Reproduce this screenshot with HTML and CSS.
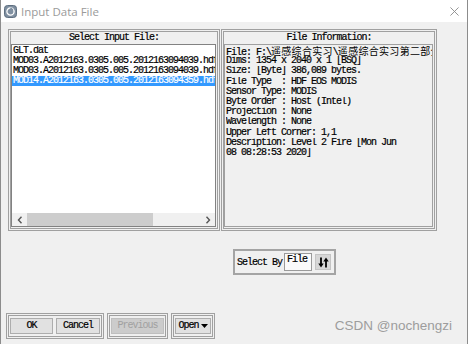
FILE: index.html
```html
<!DOCTYPE html>
<html lang="en">
<head>
    <meta charset="UTF-8">
    <title>Input Data File</title>
    <link rel="stylesheet" href="styles.css">
</head>
<body>
    <div class="window">
        <div class="titlebar">
            <svg class="app-icon" viewBox="0 0 13 13">
                <rect x="0.5" y="0.5" width="12" height="12" rx="3" fill="#7f8fa0" stroke="#5f6f80"/>
                <circle cx="6.5" cy="6.5" r="3.6" fill="none" stroke="#fff" stroke-width="1.3"/>
                <path d="M6.5 2.9 L9 5" stroke="#7f8fa0" stroke-width="1.4"/>
            </svg>
            <span class="title">Input Data File</span>
            <svg class="close" viewBox="0 0 10 10">
                <path d="M0.5 0.5 L9.5 9.5 M9.5 0.5 L0.5 9.5" stroke="#8a8a8a" stroke-width="1"/>
            </svg>
        </div>
        <div class="client">
            <div class="panels">
                <div class="panel panel-files">
                    <div class="panel-head">Select Input File:</div>
                    <div class="listbox">
                        <ul class="file-list">
                            <li>GLT.dat</li>
                            <li>MOD03.A2012163.0305.005.2012163094039.hdf</li>
                            <li>MOD03.A2012163.0305.005.2012163094039.hdf</li>
                            <li class="selected">MOD14.A2012163.0305.005.2012163094359.hdf</li>
                        </ul>
                        <div class="hscroll">
                            <div class="arrow">
                                <svg viewBox="0 0 6 8"><path d="M4.5 0.8 L1.5 4 L4.5 7.2" fill="none" stroke="#555" stroke-width="1.4"/></svg>
                            </div>
                            <div class="thumb"></div>
                            <div class="track"></div>
                            <div class="arrow">
                                <svg viewBox="0 0 6 8"><path d="M1.5 0.8 L4.5 4 L1.5 7.2" fill="none" stroke="#555" stroke-width="1.4"/></svg>
                            </div>
                        </div>
                    </div>
                </div>
                <div class="panel panel-info">
                    <div class="panel-head">File Information:</div>
                    <div class="info-text">
                        <div class="line">File: F:\<span class="cjk">遥感综合实习</span>\<span class="cjk">遥感综合实习第二部分</span></div>
                        <div class="line">Dims: 1354 x 2040 x 1 [BSQ]</div>
                        <div class="line">Size: [Byte] 386,089 bytes.</div>
                        <div class="line">File Type  : HDF EOS MODIS</div>
                        <div class="line">Sensor Type: MODIS</div>
                        <div class="line">Byte Order : Host (Intel)</div>
                        <div class="line">Projection : None</div>
                        <div class="line">Wavelength : None</div>
                        <div class="line">Upper Left Corner: 1,1</div>
                        <div class="line">Description: Level 2 Fire [Mon Jun</div>
                        <div class="line">08 08:28:53 2020]</div>
                    </div>
                </div>
            </div>

            <div class="select-row">
                <div class="select-by">
                    <span class="select-label">Select By</span>
                    <div class="select-field">File</div>
                    <div class="sort-btn">
                        <svg viewBox="0 0 11 11">
                            <path d="M3 0.5 V8" stroke="#000" stroke-width="1.8"/>
                            <path d="M0.3 6.5 L3 10.5 L5.7 6.5 Z" fill="#000"/>
                            <path d="M8 3 V10.5" stroke="#000" stroke-width="1.8"/>
                            <path d="M5.3 4.5 L8 0.5 L10.7 4.5 Z" fill="#000"/>
                        </svg>
                    </div>
                </div>
            </div>

            <div class="button-row">
                <div class="btn-group">
                    <div class="btn btn-ok">OK</div>
                    <div class="btn btn-cancel">Cancel</div>
                </div>
                <div class="btn-group">
                    <div class="btn btn-previous disabled">Previous</div>
                </div>
                <div class="btn-group">
                    <div class="btn btn-open">Open<svg class="caret" viewBox="0 0 7 4"><path d="M0 0 H7 L3.5 4 Z" fill="#000"/></svg></div>
                </div>
            </div>
        </div>
        <div class="watermark">CSDN @nochengzi</div>
    </div>
</body>
</html>
```

FILE: styles.css
```css
* {
    box-sizing: border-box;
}
body {
    margin: 0;
    background: #fff;
}
.window {
    width: 468px;
    height: 344px;
    border-left: 1px solid #8c8c8c;
    border-right: 1px solid #8c8c8c;
    background: #f0f0f0;
    display: flex;
    flex-direction: column;
    position: relative;
    font-family: "Liberation Mono", "Noto Sans CJK SC", monospace;
    font-size: 10px;
    letter-spacing: -1px;
    color: #000;
    -webkit-text-stroke: 0.2px #000;
}

/* title bar */
.titlebar {
    height: 22px;
    background: #fff;
    display: flex;
    align-items: center;
    padding-left: 3px;
    -webkit-text-stroke: 0;
}
.app-icon {
    width: 13px;
    height: 13px;
}
.title {
    font-family: "Open Sans", sans-serif;
    font-size: 11.5px;
    letter-spacing: 0;
    color: #9a9a9a;
    margin-left: 4px;
}
.close {
    margin-left: auto;
    margin-right: 8px;
    width: 9px;
    height: 9px;
}

/* dialog body */
.client {
    flex: 1;
    display: flex;
    flex-direction: column;
    padding: 7px 0 5px 5px;
}
.panels {
    display: flex;
    gap: 1px;
    height: 202px;
    margin-left: 2px;
}
.panel {
    border: 3px double #a0a0a0;
    display: flex;
    flex-direction: column;
}
.panel-files {
    width: 212px;
}
.panel-info {
    width: 216px;
}
.panel-head {
    height: 12px;
    line-height: 12px;
    text-align: center;
}

/* file list */
.listbox {
    flex: 1;
    margin: 0 1px 1px 0;
    border: 1px solid #828282;
    background: #fff;
    display: flex;
    flex-direction: column;
    overflow: hidden;
}
.file-list {
    flex: 1;
    list-style: none;
    margin: 0;
    padding: 1px 0 0 0;
}
.file-list li {
    height: 10px;
    line-height: 10px;
    padding-left: 1px;
    white-space: nowrap;
    overflow: hidden;
}
.file-list li.selected {
    background: #3399ff;
    color: #fff;
    -webkit-text-stroke: 0.2px #fff;
}
.hscroll {
    height: 13px;
    background: #f0f0f0;
    display: flex;
}
.hscroll .arrow {
    width: 15px;
    display: flex;
    align-items: center;
    justify-content: center;
}
.hscroll .arrow svg {
    width: 6px;
    height: 8px;
}
.hscroll .thumb {
    width: 126px;
    background: #cdcdcd;
}
.hscroll .track {
    flex: 1;
}

/* info text */
.info-text {
    flex: 1;
    margin: 0 1px 1px 0;
    border: 1px solid #a0a0a0;
    padding: 1px 0 0 1px;
    overflow: hidden;
}
.info-text .line {
    height: 10.2px;
    line-height: 10.2px;
    white-space: pre;
    overflow: hidden;
}
.cjk {
    font-family: "Noto Sans CJK SC", sans-serif;
    letter-spacing: 0.3px;
    line-height: 10px;
    -webkit-text-stroke: 0;
}

/* select by */
.select-row {
    margin-top: 18px;
    padding-left: 227px;
}
.select-by {
    display: inline-flex;
    align-items: center;
    border: 2px solid #a4a4a4;
    padding: 2px 3px 2px 2px;
    gap: 2px;
}
.select-label {
    padding-top: 1px;
}
.select-field {
    width: 28px;
    height: 18px;
    border: 1px solid #9a9a9a;
    background: #fafafa;
    padding: 0 0 0 2px;
    line-height: 12px;
}
.sort-btn {
    width: 16px;
    height: 16px;
    margin-left: 1px;
    background: #d6d6d6;
    border: 1px solid #c4c4c4;
    display: flex;
    align-items: center;
    justify-content: center;
}
.sort-btn svg {
    width: 11px;
    height: 11px;
}

/* bottom buttons */
.button-row {
    margin-top: auto;
    display: flex;
    gap: 3px;
}
.btn-group {
    display: flex;
    gap: 3px;
    border: 3px double #a0a0a0;
    padding: 2px 1px;
}
.btn {
    height: 16px;
    line-height: 14px;
    background: #e1e1e1;
    border: 1px solid #adadad;
    text-align: center;
    display: flex;
    align-items: center;
    justify-content: center;
}
.btn-ok {
    width: 43px;
}
.btn-cancel {
    width: 44px;
}
.btn-previous {
    width: 53px;
}
.btn-open {
    width: 36px;
}
.btn.disabled {
    background: #cccccc;
    border-color: #bfbfbf;
    color: #a0a0a0;
    -webkit-text-stroke: 0;
}
.caret {
    width: 7px;
    height: 4px;
    margin-left: 2px;
}

.watermark {
    position: absolute;
    right: 15px;
    top: 318px;
    font-family: "Liberation Sans", Arial, sans-serif;
    font-size: 13.5px;
    letter-spacing: 0;
    color: #9d9d9d;
    -webkit-text-stroke: 0;
}
```
